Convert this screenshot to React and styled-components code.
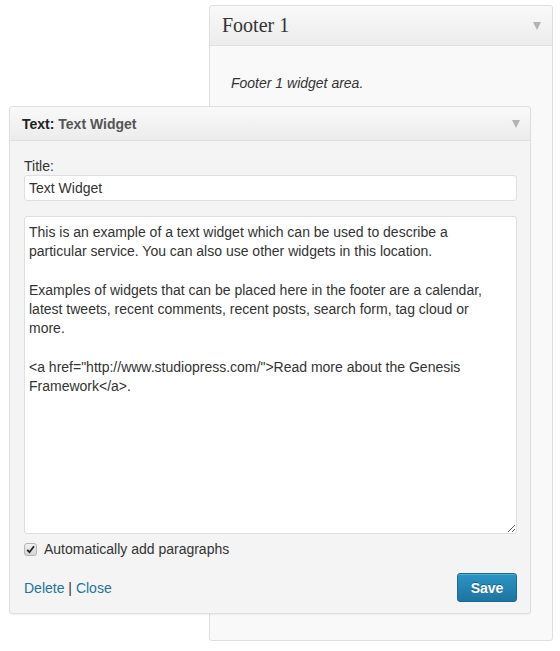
import React from "react";
import styled, { createGlobalStyle } from "styled-components";

const GlobalStyle = createGlobalStyle`
  body {
    margin: 0;
    background: #fff;
    font-family: "Liberation Sans", Arial, sans-serif;
    color: #333;
  }
`;

const Stage = styled.div`
  position: relative;
  width: 560px;
  height: 651px;
  overflow: hidden;
  box-sizing: border-box;
  padding: 5px 0 0 209px;
`;

const Sidebar = styled.div`
  width: 344px;
  height: 636px;
  box-sizing: border-box;
  border: 1px solid #dfdfdf;
  border-radius: 3px;
  background: #f9f9f9;
  box-shadow: 0 1px 0 #fff inset;
`;

const SidebarHead = styled.div`
  height: 40px;
  box-sizing: border-box;
  display: flex;
  align-items: center;
  justify-content: space-between;
  padding: 0 11px 0 12px;
  border-bottom: 1px solid #dfdfdf;
  background: linear-gradient(to bottom, #f9f9f9, #ececec);
  border-radius: 3px 3px 0 0;
`;

const SidebarTitle = styled.h3`
  margin: 0;
  font-family: "Liberation Serif", Georgia, serif;
  font-weight: normal;
  font-size: 20px;
  color: #333;
`;

const Arrow = styled.span`
  width: 0;
  height: 0;
  border-left: 4px solid transparent;
  border-right: 4px solid transparent;
  border-top: 8px solid #b3b3b3;
`;

const Description = styled.p`
  margin: 0;
  padding: 29px 0 0 21px;
  font-size: 14px;
  font-style: italic;
  color: #333;
`;

const Widget = styled.div`
  position: absolute;
  left: 9px;
  top: 106px;
  width: 522px;
  height: 508px;
  box-sizing: border-box;
  border: 1px solid #dfdfdf;
  border-radius: 3px;
  background: #f4f4f4;
  box-shadow: 0 1px 2px rgba(0, 0, 0, 0.06);
  display: flex;
  flex-direction: column;
`;

const WidgetHead = styled.div`
  height: 34px;
  flex: none;
  box-sizing: border-box;
  display: flex;
  align-items: center;
  justify-content: space-between;
  padding: 0 10px 0 12px;
  border-bottom: 1px solid #dfdfdf;
  background: linear-gradient(to bottom, #f9f9f9, #ececec);
  border-radius: 3px 3px 0 0;
`;

const WidgetTitle = styled.h4`
  margin: 0;
  font-size: 14px;
  font-weight: bold;
  color: #222;

  span {
    color: #555;
  }
`;

const WidgetBody = styled.div`
  flex: 1;
  display: flex;
  flex-direction: column;
  padding: 17px 13px 11px 14px;
`;

const Label = styled.label`
  font-size: 14px;
  line-height: 16px;
  color: #333;
  margin-bottom: 1px;
`;

const TitleInput = styled.input`
  height: 26px;
  box-sizing: border-box;
  border: 1px solid #dfdfdf;
  border-radius: 3px;
  background: #fff;
  padding: 0 4px;
  font-family: inherit;
  font-size: 14px;
  color: #333;
  outline: none;
`;

const Content = styled.textarea`
  margin-top: 15px;
  height: 318px;
  box-sizing: border-box;
  border: 1px solid #dfdfdf;
  border-radius: 3px;
  background: #fff;
  padding: 6px 14px 5px 4px;
  font-family: inherit;
  font-size: 14px;
  line-height: 19.3px;
  color: #333;
  outline: none;
  resize: vertical;
  overflow: hidden;
`;

const CheckRow = styled.label`
  display: flex;
  align-items: center;
  gap: 7px;
  margin-top: 7px;
  font-size: 14px;
  color: #333;
`;

const CheckBox = styled.span`
  width: 13px;
  height: 13px;
  box-sizing: border-box;
  border: 1px solid #b4b4b4;
  border-radius: 3px;
  background: linear-gradient(to bottom, #f2f2f2, #d5d5d5);
  display: flex;
  align-items: center;
  justify-content: center;
`;

const Actions = styled.div`
  margin-top: auto;
  display: flex;
  align-items: center;
  justify-content: space-between;
`;

const Links = styled.div`
  font-size: 14px;
  color: #333;
  padding-top: 1px;
`;

const Link = styled.a`
  color: #21759b;
  text-decoration: none;
`;

const SaveButton = styled.button`
  width: 60px;
  height: 29px;
  box-sizing: border-box;
  border: 1px solid #1b6890;
  border-radius: 3px;
  background: linear-gradient(to bottom, #2a95c5, #1e74a0);
  box-shadow: inset 0 1px 0 rgba(120, 200, 230, 0.5);
  color: #fff;
  font-family: inherit;
  font-size: 14px;
  font-weight: bold;
  text-shadow: 0 -1px 0 rgba(0, 0, 0, 0.3);
`;

const text = `This is an example of a text widget which can be used to describe a particular service. You can also use other widgets in this location.

Examples of widgets that can be placed here in the footer are a calendar, latest tweets, recent comments, recent posts, search form, tag cloud or more.

<a href="http://www.studiopress.com/">Read more about the Genesis Framework</a>.`;

export default function App() {
  return (
    <>
      <GlobalStyle />
      <Stage>
        <Sidebar>
          <SidebarHead>
            <SidebarTitle>Footer 1</SidebarTitle>
            <Arrow />
          </SidebarHead>
          <Description>Footer 1 widget area.</Description>
        </Sidebar>

        <Widget>
          <WidgetHead>
            <WidgetTitle>
              Text: <span>Text Widget</span>
            </WidgetTitle>
            <Arrow />
          </WidgetHead>
          <WidgetBody>
            <Label>Title:</Label>
            <TitleInput defaultValue="Text Widget" />
            <Content defaultValue={text} spellCheck={false} />
            <CheckRow>
              <CheckBox>
                <svg width="9" height="9" viewBox="0 0 9 9">
                  <path
                    d="M1.2 4.8 L3.5 7.2 L8 1.2"
                    fill="none"
                    stroke="#222"
                    strokeWidth="1.8"
                  />
                </svg>
              </CheckBox>
              Automatically add paragraphs
            </CheckRow>
            <Actions>
              <Links>
                <Link href="#">Delete</Link> | <Link href="#">Close</Link>
              </Links>
              <SaveButton>Save</SaveButton>
            </Actions>
          </WidgetBody>
        </Widget>
      </Stage>
    </>
  );
}
